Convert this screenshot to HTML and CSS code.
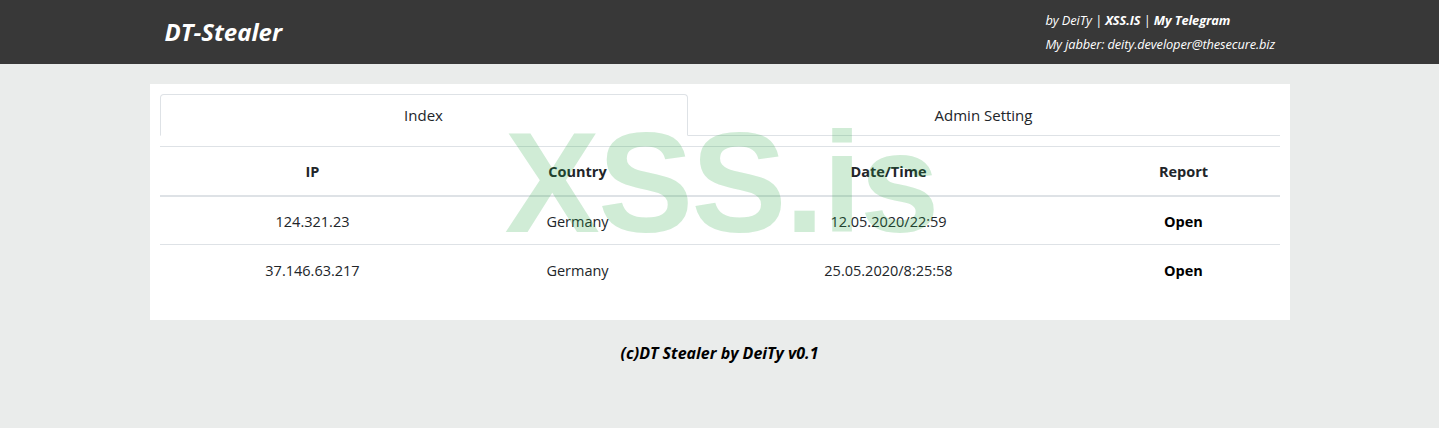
FILE: index.html
```html
<!DOCTYPE html>
<html>
<head>
<meta charset="utf-8">
<link rel="stylesheet" href="styles.css">
</head>
<body>
<header class="topbar">
  <div class="topbar-inner">
    <div class="brand">DT-Stealer</div>
    <div class="contacts">
      <div class="line">by DeiTy | <b>XSS.IS</b> | <b>My Telegram</b></div>
      <div class="line">My jabber: deity.developer@thesecure.biz</div>
    </div>
  </div>
</header>
<main class="card">
  <nav class="tabs">
    <div class="tab active">Index</div>
    <div class="tab">Admin Setting</div>
  </nav>
  <table class="logs">
    <colgroup>
      <col class="c1"><col class="c2"><col class="c3"><col class="c4">
    </colgroup>
    <thead>
      <tr><th>IP</th><th>Country</th><th>Date/Time</th><th>Report</th></tr>
    </thead>
    <tbody>
      <tr><td>124.321.23</td><td>Germany</td><td>12.05.2020/22:59</td><td class="open">Open</td></tr>
      <tr><td>37.146.63.217</td><td>Germany</td><td>25.05.2020/8:25:58</td><td class="open">Open</td></tr>
    </tbody>
  </table>
  <div class="watermark">XSS.is</div>
</main>
<footer class="footer">(c)DT Stealer by DeiTy v0.1</footer>
</body>
</html>
```
FILE: styles.css
```css
* { box-sizing: border-box; }
body {
  margin: 0;
  background: #eaeceb;
  font-family: "Open Sans", "Noto Sans", sans-serif;
  color: #212529;
}
.topbar {
  background: #383838;
  height: 64px;
}
.topbar-inner {
  width: 1140px;
  margin: 0 auto;
  height: 64px;
  display: flex;
  justify-content: space-between;
  align-items: flex-start;
  padding: 0 15px;
}
.brand {
  color: #fff;
  font-weight: 700;
  font-style: italic;
  font-size: 24px;
  margin-top: 15px;
}
.contacts {
  color: #fff;
  font-style: italic;
  font-size: 12.8px;
  width: 229px;
  margin-top: 11px;
  letter-spacing: -0.1px;
}
.contacts .line { height: 24px; line-height: 18px; white-space: nowrap; }
.card {
  position: relative;
  width: 1140px;
  margin: 20px auto 0;
  background: #fff;
  padding: 10px 10px 26px;
}
.tabs {
  display: flex;
  border-bottom: 1px solid #dee2e6;
  height: 42px;
}
.tab {
  flex: 0 0 528px;
  text-align: center;
  font-size: 15px;
  line-height: 40px;
  color: #212529;
  border: 1px solid transparent;
  border-radius: 4px 4px 0 0;
  margin-bottom: -1px;
}
.tab + .tab { flex: 1; }
.tab.active {
  border-color: #dee2e6 #dee2e6 #fff;
  background: #fff;
}
.logs {
  width: 100%;
  border-collapse: collapse;
  margin-top: 10px;
  table-layout: fixed;
  font-size: 14.5px;
}
.c1 { width: 306px; }
.c2 { width: 224px; }
.c3 { width: 398px; }
.c4 { width: 192px; }
.logs th, .logs td {
  text-align: center;
  border-top: 1px solid #dee2e6;
  height: 49px;
  padding: 1px 0 0;
}
.logs th { font-weight: 700; border-bottom: 2px solid #dee2e6; height: 49px; }
.logs td { padding-top: 2px; }
.logs td.open { font-weight: 700; color: #000; }
.logs tbody tr:first-child td { border-top: 0; }
.watermark {
  position: absolute;
  left: 355px;
  top: 27px;
  font-size: 143px;
  font-weight: 700;
  letter-spacing: -2px;
  color: rgba(40, 167, 69, 0.22);
  pointer-events: none;
  line-height: 1;
  font-family: "Liberation Sans", "Open Sans", sans-serif;
}
.footer {
  text-align: center;
  font-weight: 700;
  font-style: italic;
  font-size: 16px;
  color: #000;
  margin-top: 22px;
}
```
